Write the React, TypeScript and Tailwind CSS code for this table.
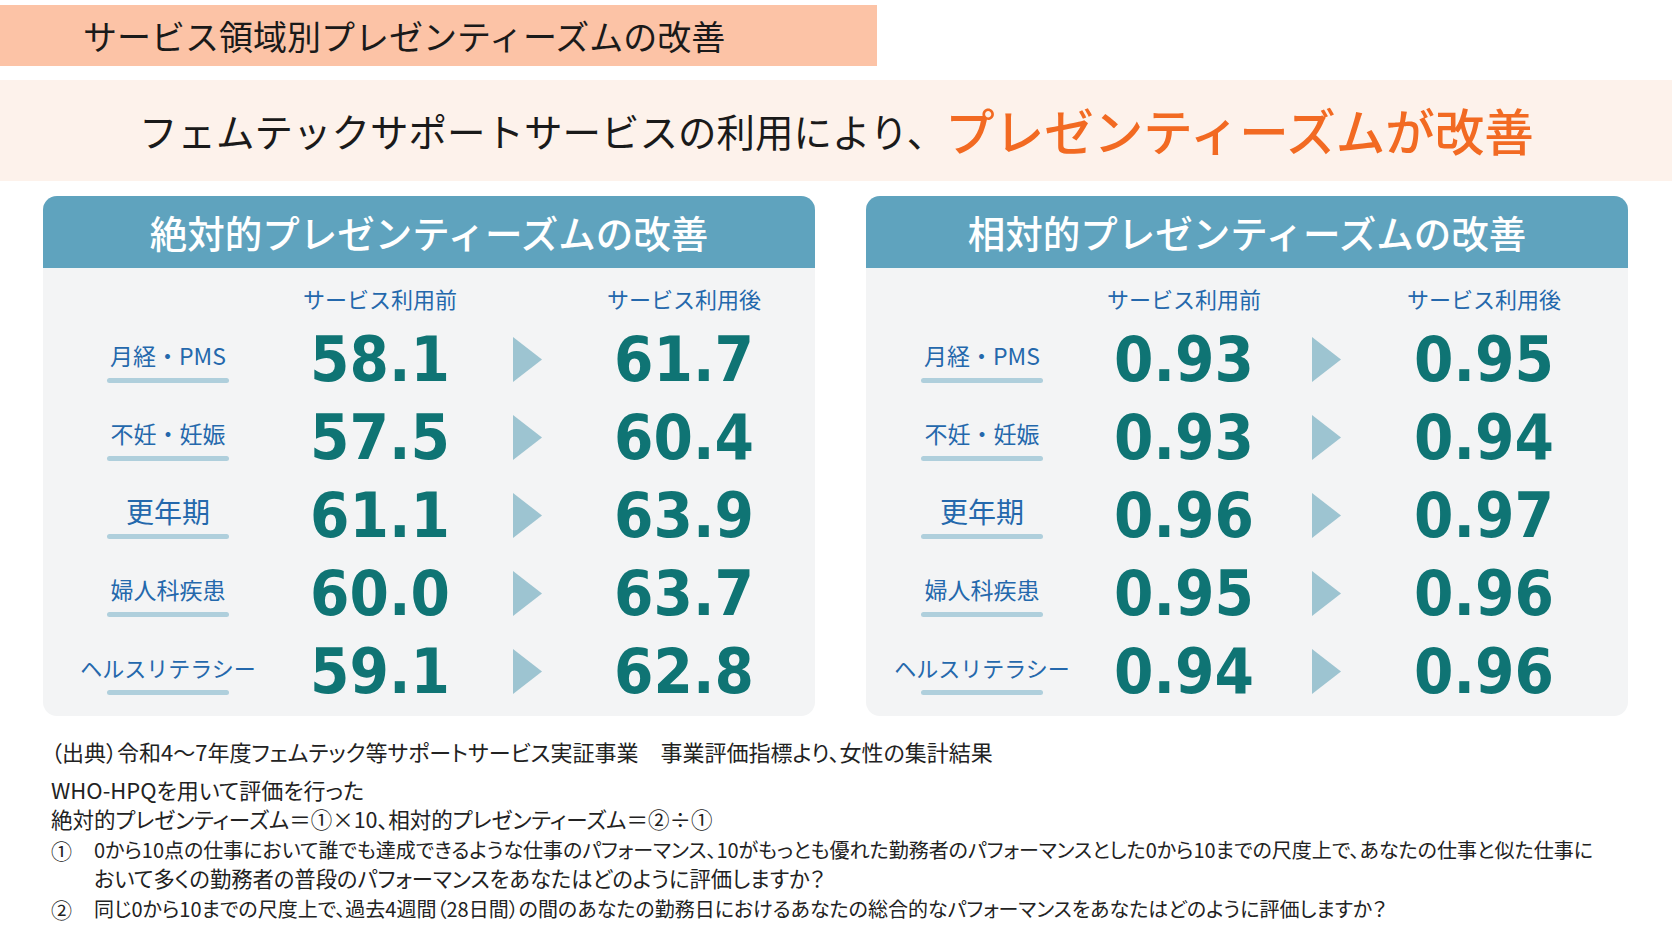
const jp = "font-['Noto_Sans_CJK_JP','Noto_Sans',sans-serif]";

type Row = { label: string; size: string; before: string; after: string };

const absRows: Row[] = [
  { label: "月経・PMS", size: "text-[23px]", before: "58.1", after: "61.7" },
  { label: "不妊・妊娠", size: "text-[23px]", before: "57.5", after: "60.4" },
  { label: "更年期", size: "text-[28px]", before: "61.1", after: "63.9" },
  { label: "婦人科疾患", size: "text-[23px]", before: "60.0", after: "63.7" },
  { label: "ヘルスリテラシー", size: "text-[22px]", before: "59.1", after: "62.8" },
];

const relRows: Row[] = [
  { label: "月経・PMS", size: "text-[23px]", before: "0.93", after: "0.95" },
  { label: "不妊・妊娠", size: "text-[23px]", before: "0.93", after: "0.94" },
  { label: "更年期", size: "text-[28px]", before: "0.96", after: "0.97" },
  { label: "婦人科疾患", size: "text-[23px]", before: "0.95", after: "0.96" },
  { label: "ヘルスリテラシー", size: "text-[22px]", before: "0.94", after: "0.96" },
];

function Arrow() {
  return (
    <svg width="29" height="45" viewBox="0 0 29 45">
      <polygon points="0,0 29,22.5 0,45" fill="#9dc4d1" />
    </svg>
  );
}

function Panel({ title, rows, cols, width }: { title: string; rows: Row[]; cols: string; width: string }) {
  return (
    <div className={`${width} h-[520px] rounded-[14px] bg-[#f3f4f5] overflow-hidden`}>
      <div className={`h-[72px] bg-[#5fa3be] flex items-center justify-center text-white text-[37.5px] font-medium ${jp}`}>
        {title}
      </div>
      <div className={`grid ${cols} pt-[16px]`}>
        <div />
        <div className={`h-[28px] leading-[28px] text-center text-[22px] text-[#2468ac] whitespace-nowrap ${jp}`}>サービス利用前</div>
        <div />
        <div className={`h-[28px] leading-[28px] text-center text-[22px] text-[#2468ac] whitespace-nowrap ${jp}`}>サービス利用後</div>
      </div>
      <div className="mt-[8px]">
        {rows.map((r) => (
          <div key={r.label} className={`grid ${cols} h-[78px]`}>
            <div className="flex flex-col items-center pt-[20px]">
              <div className={`h-[30px] leading-[30px] ${r.size} text-[#2468ac] whitespace-nowrap ${jp}`}>{r.label}</div>
              <div className="mt-[8px] w-[122px] h-[5px] rounded-full bg-[#afcfdc]" />
            </div>
            <div className="flex items-center justify-center">
              <span className="font-['DejaVu_Sans_Condensed','DejaVu_Sans',sans-serif] [font-stretch:condensed] font-bold text-[63px] leading-none text-[#0f7474]">
                {r.before}
              </span>
            </div>
            <div className="flex items-center justify-center">
              <Arrow />
            </div>
            <div className="flex items-center justify-center">
              <span className="font-['DejaVu_Sans_Condensed','DejaVu_Sans',sans-serif] [font-stretch:condensed] font-bold text-[63px] leading-none text-[#0f7474]">
                {r.after}
              </span>
            </div>
          </div>
        ))}
      </div>
    </div>
  );
}

export default function App() {
  return (
    <div className={`w-[1672px] h-[941px] bg-white overflow-hidden pt-[5px] ${jp}`}>
      {/* section tab */}
      <div className="w-[877px] h-[61px] bg-[#fcc3a6] flex items-center pl-[83px] text-[34px] text-[#1a1a1a]">
        サービス領域別プレゼンティーズムの改善
      </div>

      {/* headline band */}
      <div className="mt-[14px] h-[101px] bg-[#fdf2eb] flex items-center pl-[139px]">
        <span className="text-[38.5px] text-[#1a1a1a] whitespace-nowrap">フェムテックサポートサービスの利用により、</span>
        <span className="text-[49.5px] text-[#f26a22] font-medium whitespace-nowrap">プレゼンティーズムが改善</span>
      </div>

      {/* panels */}
      <div className="mt-[15px] flex gap-[51px] px-[43px]">
        <Panel title="絶対的プレゼンティーズムの改善" rows={absRows} cols="grid-cols-[250px_174px_120px_194px]" width="w-[772px]" />
        <Panel title="相対的プレゼンティーズムの改善" rows={relRows} cols="grid-cols-[232px_172px_112px_204px]" width="w-[762px]" />
      </div>

      {/* notes */}
      <div className="mt-[20px] px-[51px] text-[#222] [font-feature-settings:'palt'] whitespace-nowrap">
        <div className="leading-[30px] text-[22px]">（出典）令和4～7年度フェムテック等サポートサービス実証事業　事業評価指標より、女性の集計結果</div>
        <div className="mt-[8px] leading-[30px] text-[22px]">WHO-HPQを用いて評価を行った</div>
        <div className="leading-[30px] text-[21.5px]">絶対的プレゼンティーズム＝①×10、相対的プレゼンティーズム＝②÷①</div>
        <div className="flex leading-[30px] mt-[1px]">
          <span className="w-[43px] shrink-0 text-[21px]">①</span>
          <div>
            <div className="text-[20px]">0から10点の仕事において誰でも達成できるような仕事のパフォーマンス、10がもっとも優れた勤務者のパフォーマンスとした0から10までの尺度上で、あなたの仕事と似た仕事に</div>
            <div className="-mt-[2px] text-[21.3px]">おいて多くの勤務者の普段のパフォーマンスをあなたはどのように評価しますか？</div>
          </div>
        </div>
        <div className="flex leading-[30px] mt-[1px]">
          <span className="w-[43px] shrink-0 text-[21px]">②</span>
          <span className="text-[20px]">同じ0から10までの尺度上で、過去4週間（28日間）の間のあなたの勤務日におけるあなたの総合的なパフォーマンスをあなたはどのように評価しますか？</span>
        </div>
      </div>
    </div>
  );
}
